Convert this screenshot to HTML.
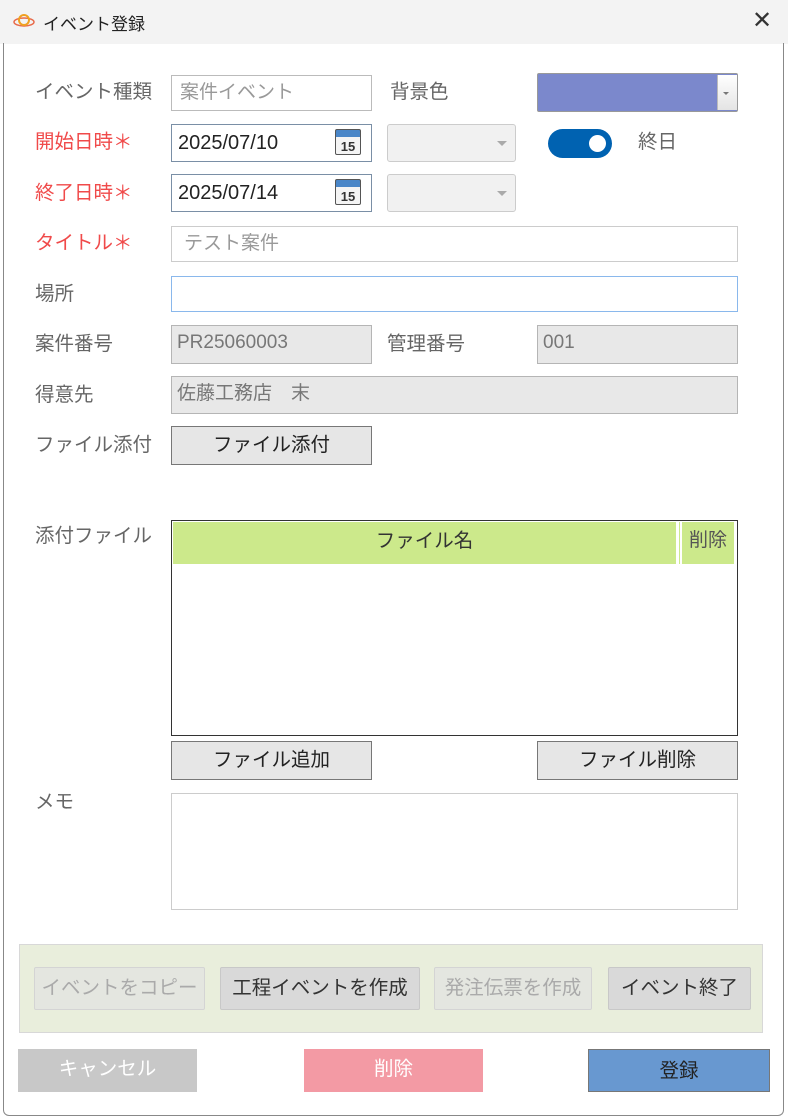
<!DOCTYPE html>
<html><head><meta charset="utf-8"><style>
*{box-sizing:border-box;margin:0;padding:0}
body{width:788px;height:1120px;background:#fff;position:relative;overflow:hidden;font-family:"Liberation Sans","Noto Sans CJK JP",sans-serif;color:#555}
.a{position:absolute}
.lbl{position:absolute;font-size:19.5px;color:#666;line-height:22px}
.red{color:#f04a4a}
.box{position:absolute;border:1px solid #bbb;background:#fff;font-size:19px;line-height:34px;padding-left:8px}
.gray{background:#e8e8e8;border-color:#b5b5b5;color:#777;padding-left:5px}
.btn{position:absolute;border:1px solid #777;background:#e6e6e6;font-size:19.5px;color:#222;text-align:center;line-height:36px}
.dd{position:absolute;border:1px solid #ccc;border-radius:3px;background:#f1f1f1}
.dd:after{content:"";position:absolute;right:8px;top:16px;border:5px solid transparent;border-top:5px solid #aaa}
.cal{position:absolute;right:10px;top:4px;width:26px;height:26px;border:1px solid #555;border-radius:2px;background:linear-gradient(#4a86c8 0 7px,#f4f4f4 7px);font-size:13px;font-weight:bold;color:#333;text-align:center;line-height:34px}
.gb{position:absolute;top:967px;height:43px;border:1px solid #d4d4d4;border-radius:2px;font-size:19.5px;line-height:40px;text-align:center;background:#e4e6e0;color:#aaa;white-space:nowrap}
</style></head><body>
<div class="a" style="left:0;top:0;width:788px;height:44px;background:#f3f3f3"></div>
<div class="a" style="left:3px;top:43px;width:781px;height:1073px;border:1px solid #888;border-top:none;border-radius:0 0 6px 6px"></div>
<svg class="a" style="left:12px;top:12px" width="24" height="18"><ellipse cx="12" cy="10" rx="10" ry="4" fill="none" stroke="#e86a4a" stroke-width="1.5"/><circle cx="12" cy="8" r="5" fill="none" stroke="#f0a020" stroke-width="2"/></svg>
<div class="a" style="left:43px;top:10px;font-size:17px;color:#222">イベント登録</div>
<div class="a" style="left:752px;top:6px;font-size:24px;color:#333">✕</div>

<div class="lbl" style="left:35px;top:81px">イベント種類</div>
<div class="box" style="left:171px;top:75px;width:201px;height:36px;color:#999">案件イベント</div>
<div class="lbl" style="left:390px;top:81px">背景色</div>
<div class="a" style="left:537px;top:73px;width:201px;height:39px;border:1px solid #999;border-radius:2px;background:#7b88cc"></div>
<div class="a" style="left:717px;top:75px;width:20px;height:35px;background:linear-gradient(#fff,#e4e4e4);border-left:1px solid #bbb"></div>
<div class="a" style="left:723px;top:92px;border:3px solid transparent;border-top:3px solid #777"></div>

<div class="lbl red" style="left:35px;top:131px">開始日時＊</div>
<div class="box" style="left:171px;top:124px;width:201px;height:38px;border-color:#7a8fa6;color:#222;line-height:36px;padding-left:6px;font-size:20px">2025/07/10<div class="cal">15</div></div>
<div class="dd" style="left:387px;top:124px;width:129px;height:38px"></div>
<div class="a" style="left:548px;top:129px;width:64px;height:29px;border-radius:15px;background:#0062b1"></div>
<div class="a" style="left:589px;top:135px;width:17px;height:17px;border-radius:50%;background:#fff"></div>
<div class="lbl" style="left:638px;top:131px">終日</div>

<div class="lbl red" style="left:35px;top:182px">終了日時＊</div>
<div class="box" style="left:171px;top:174px;width:201px;height:38px;border-color:#7a8fa6;color:#222;line-height:36px;padding-left:6px;font-size:20px">2025/07/14<div class="cal">15</div></div>
<div class="dd" style="left:387px;top:174px;width:129px;height:38px"></div>

<div class="lbl red" style="left:35px;top:232px">タイトル＊</div>
<div class="box" style="left:171px;top:226px;width:567px;height:36px;border-color:#ccc;color:#999;padding-left:12px">テスト案件</div>

<div class="lbl" style="left:35px;top:283px">場所</div>
<div class="box" style="left:171px;top:276px;width:567px;height:36px;border-color:#8ab8ec"></div>

<div class="lbl" style="left:35px;top:333px">案件番号</div>
<div class="box gray" style="left:171px;top:325px;width:201px;height:39px">PR25060003</div>
<div class="lbl" style="left:387px;top:333px">管理番号</div>
<div class="box gray" style="left:537px;top:325px;width:201px;height:39px">001</div>

<div class="lbl" style="left:35px;top:384px">得意先</div>
<div class="box gray" style="left:171px;top:376px;width:567px;height:38px">佐藤工務店　末</div>

<div class="lbl" style="left:35px;top:434px">ファイル添付</div>
<div class="btn" style="left:171px;top:426px;width:201px;height:39px">ファイル添付</div>

<div class="lbl" style="left:35px;top:525px">添付ファイル</div>
<div class="a" style="left:171px;top:520px;width:567px;height:216px;border:1px solid #333;background:#fff"></div>
<div class="a" style="left:173px;top:522px;width:503px;height:42px;background:#cce98b;font-size:19.5px;color:#333;text-align:center;line-height:38px">ファイル名</div>
<div class="a" style="left:679px;top:522px;width:1px;height:42px;background:#cce98b"></div>
<div class="a" style="left:682px;top:522px;width:52px;height:42px;background:#cce98b;font-size:19px;color:#555;text-align:center;line-height:38px">削除</div>

<div class="btn" style="left:171px;top:741px;width:201px;height:39px">ファイル追加</div>
<div class="btn" style="left:537px;top:741px;width:201px;height:39px">ファイル削除</div>

<div class="lbl" style="left:35px;top:791px">メモ</div>
<div class="a" style="left:171px;top:793px;width:567px;height:117px;border:1px solid #ccc"></div>

<div class="a" style="left:19px;top:944px;width:744px;height:89px;background:#e9eedc;border:1px solid #d8d8d8"></div>
<div class="gb" style="left:34px;width:171px">イベントをコピー</div>
<div class="gb" style="left:220px;width:200px;background:#d9d9d9;color:#333;border-color:#c8c8c8">工程イベントを作成</div>
<div class="gb" style="left:434px;width:158px">発注伝票を作成</div>
<div class="gb" style="left:608px;width:143px;background:#d9d9d9;color:#333;border-color:#c8c8c8">イベント終了</div>

<div class="a" style="left:18px;top:1049px;width:179px;height:43px;background:#c8c8c8;color:#fff;font-size:19.5px;text-align:center;line-height:40px">キャンセル</div>
<div class="a" style="left:304px;top:1049px;width:179px;height:43px;background:#f39aa4;color:#fff;font-size:19.5px;text-align:center;line-height:40px">削除</div>
<div class="a" style="left:588px;top:1049px;width:182px;height:43px;background:#6898d0;border:1px solid #777;color:#222;font-size:19.5px;text-align:center;line-height:42px">登録</div>
</body></html>
